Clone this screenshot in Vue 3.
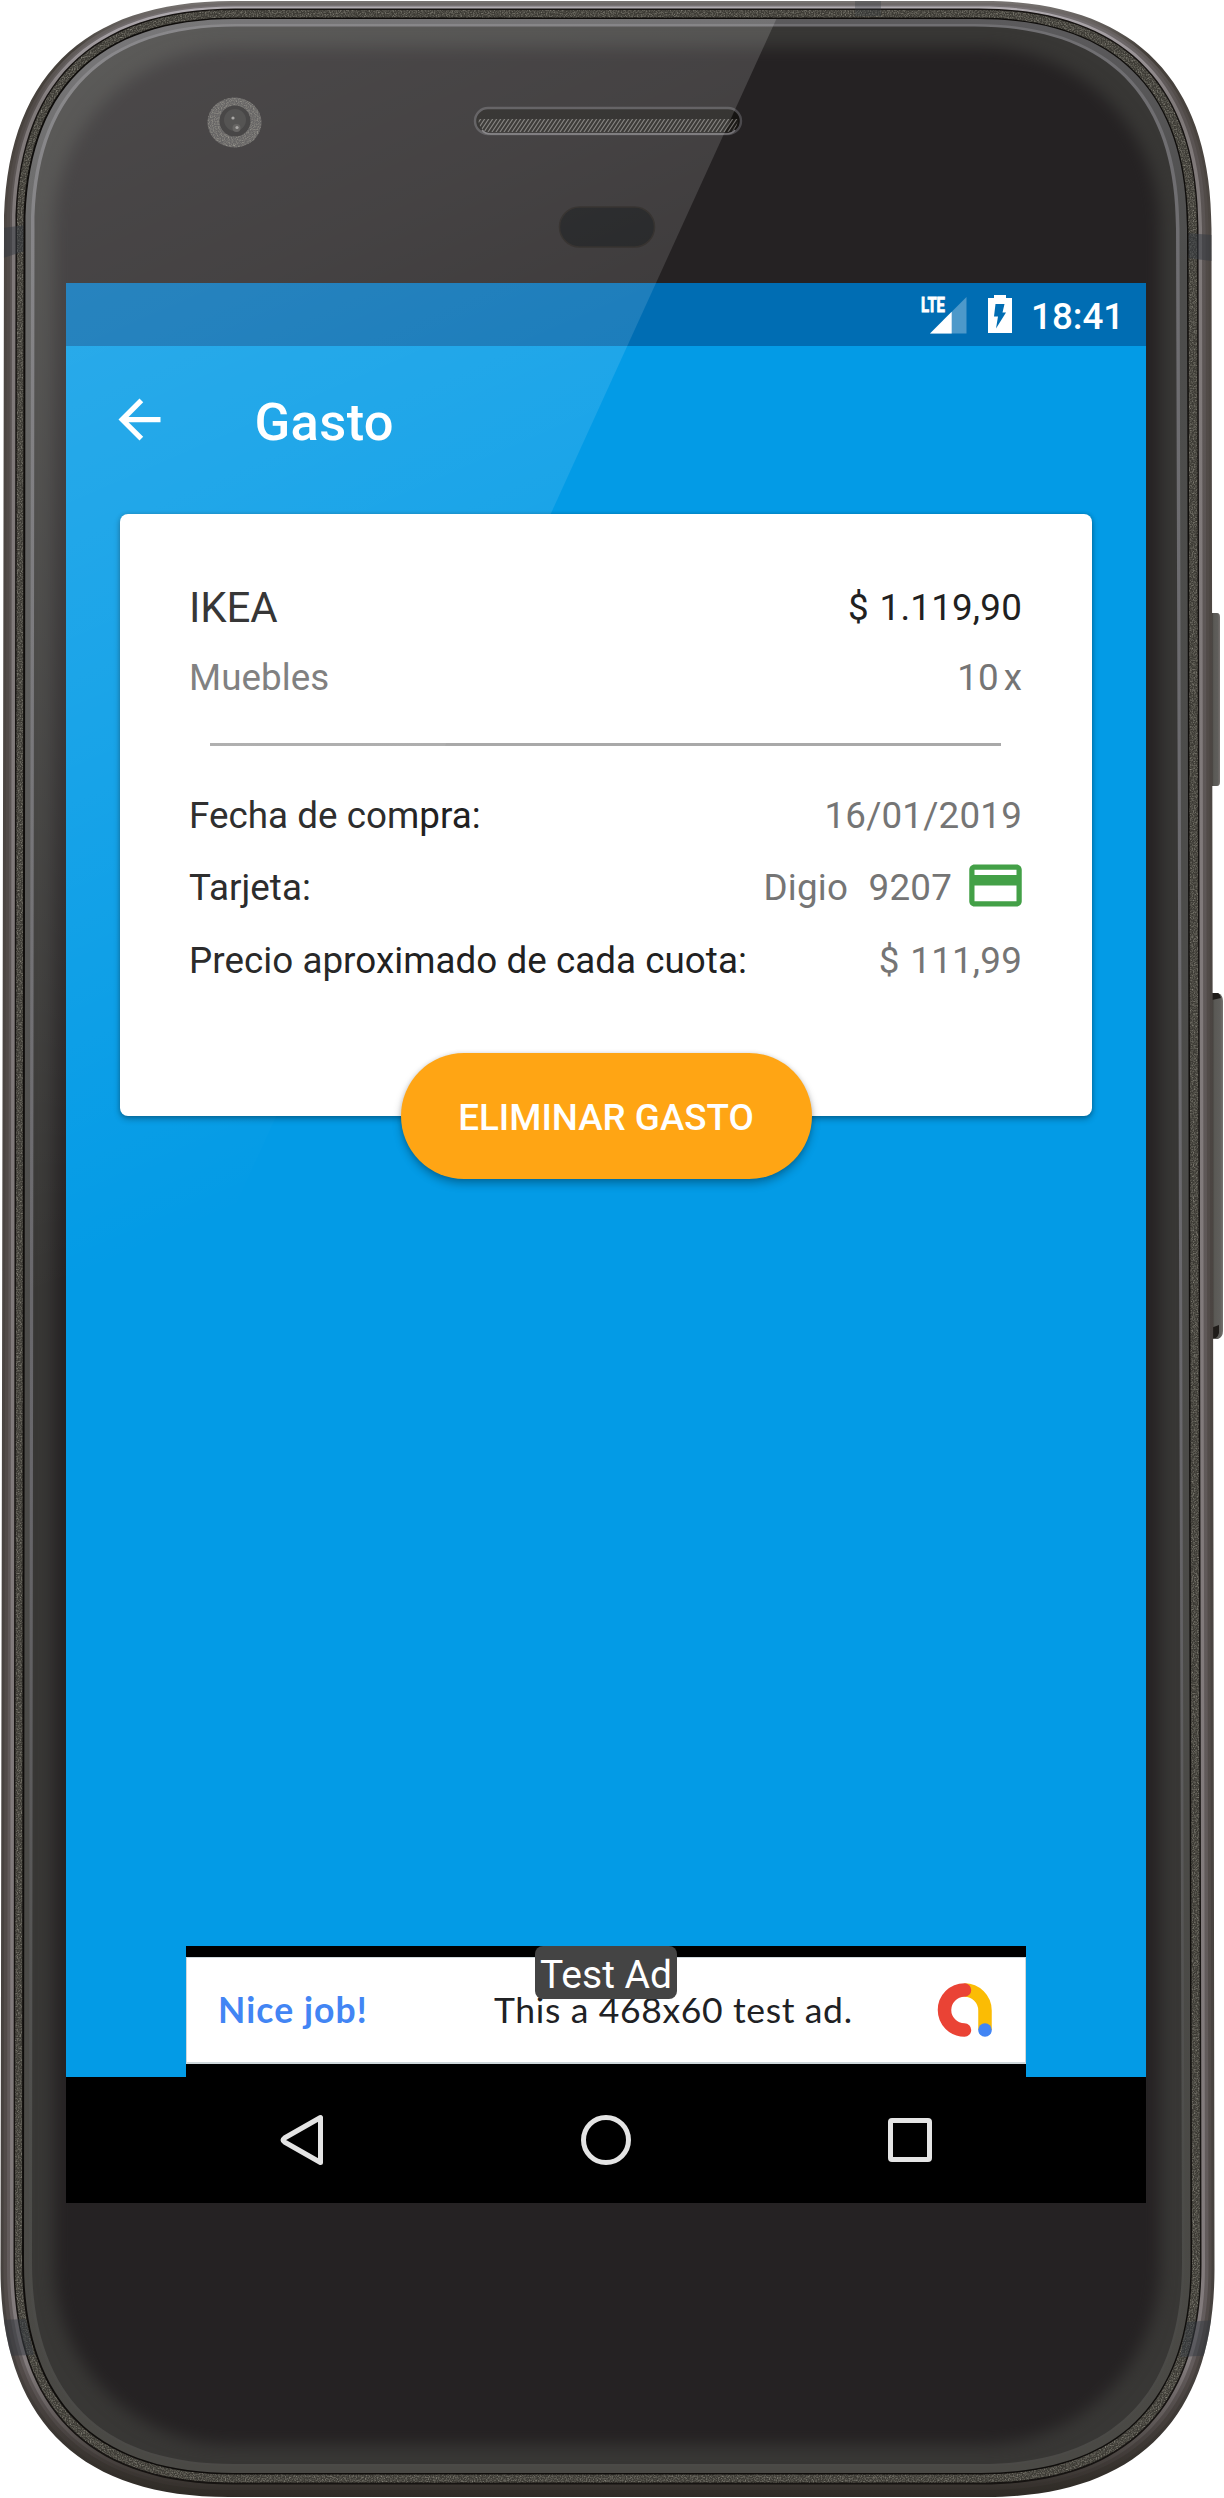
<script setup>
// Builds a slightly tapered, soft-cornered outline for one layer of the phone shell.
function shell(lt, lb, rt, rb, t, b, e) {
  const k = e * 0.342
  return [
    `M${lt} ${t + e}`,
    `C${lt} ${t + k} ${lt + k} ${t} ${lt + e} ${t}`,
    `L${rt - e} ${t}`,
    `C${rt - k} ${t} ${rt} ${t + k} ${rt} ${t + e}`,
    `L${rb} ${b - e}`,
    `C${rb} ${b - k} ${rb - k} ${b} ${rb - e} ${b}`,
    `L${lb + e} ${b}`,
    `C${lb + k} ${b} ${lb} ${b - k} ${lb} ${b - e}`,
    'Z'
  ].join('')
}

const metal = [
  { d: shell(4, 0.5, 1211.5, 1214.5, 1, 2497, 228), fill: 'url(#m0)' },
  { d: shell(7, 3.5, 1208.5, 1211.5, 3, 2494, 226), fill: 'url(#m1)' },
  { d: shell(10, 7, 1205.5, 1208.5, 5, 2490, 224), fill: 'url(#m2)' },
  { d: shell(12, 10, 1202, 1205, 6.5, 2487, 222), fill: 'url(#m3)' },
  { d: shell(15.5, 13.5, 1198.5, 1201.5, 8.5, 2484.5, 220), fill: '#161311' }
]
const grain = shell(17, 15, 1197, 1200, 10, 2482.5, 218)
const seam = shell(23.5, 22, 1188.5, 1192, 17.5, 2474.5, 212)
const bevel = shell(25.5, 24, 1187, 1190.5, 19, 2473, 210)
const bevelInner = shell(31, 29, 1179.5, 1184.5, 24, 2466, 205)
const glass = shell(34.5, 32, 1176, 1182, 26.5, 2464, 202)

const details = [
  { label: 'Fecha de compra:', value: '16/01/2019' },
  { label: 'Tarjeta:', value: 'Digio', digits: '9207', icon: true },
  { label: 'Precio aproximado de cada cuota:', value: '$ 111,99' }
]
</script>

<template>
  <main class="device">
    <svg class="shell" width="1224" height="2498" viewBox="0 0 1224 2498" aria-hidden="true">
      <defs>
        <linearGradient id="m0" x2="0" y2="1"><stop offset="0" stop-color="#777371"/><stop offset=".02" stop-color="#45403b"/><stop offset=".09" stop-color="#4d4743"/><stop offset=".5" stop-color="#4b4542"/><stop offset=".95" stop-color="#46413e"/><stop offset="1" stop-color="#2f2b26"/></linearGradient>
        <linearGradient id="m1" x2="0" y2="1"><stop offset="0" stop-color="#6f6a69"/><stop offset=".04" stop-color="#514b48"/><stop offset=".95" stop-color="#524b49"/><stop offset="1" stop-color="#302c27"/></linearGradient>
        <linearGradient id="m2" x2="0" y2="1"><stop offset="0" stop-color="#777274"/><stop offset=".04" stop-color="#5a5453"/><stop offset=".95" stop-color="#635c5c"/><stop offset="1" stop-color="#35302c"/></linearGradient>
        <linearGradient id="m3" x2="0" y2="1"><stop offset="0" stop-color="#b0abb0"/><stop offset=".04" stop-color="#7f7979"/><stop offset=".95" stop-color="#827b7c"/><stop offset="1" stop-color="#37322e"/></linearGradient>
        <linearGradient id="bev" x2="0" y2="1"><stop offset="0" stop-color="#5b5a5c"/><stop offset=".1" stop-color="#4d4d4c"/><stop offset="1" stop-color="#4a4945"/></linearGradient>
        <linearGradient id="bevIn" x2="0" y2="1"><stop offset="0" stop-color="#706f72"/><stop offset=".6" stop-color="#68676b"/><stop offset=".88" stop-color="#4c4c49"/><stop offset="1" stop-color="#4b4a47"/></linearGradient>
        <linearGradient id="key" x2="1" y2="0"><stop offset="0" stop-color="#35312e"/><stop offset=".3" stop-color="#5a5955"/><stop offset=".75" stop-color="#5f5e5b"/><stop offset="1" stop-color="#77716f"/></linearGradient>
        <filter id="soft" x="-5%" y="-5%" width="110%" height="110%" color-interpolation-filters="sRGB"><feGaussianBlur stdDeviation="8"/></filter>
        <filter id="speckle" x="0" y="0" width="100%" height="100%" color-interpolation-filters="sRGB">
          <feTurbulence type="fractalNoise" baseFrequency=".75" numOctaves="2" seed="4" result="n"/>
          <feColorMatrix in="n" type="matrix" values="0 0 0 0 .52  0 0 0 0 .51  0 0 0 0 .47  1.8 1 0 0 -1.2" result="c"/>
          <feComposite in="c" in2="SourceGraphic" operator="in" result="s"/>
          <feMerge><feMergeNode in="SourceGraphic"/><feMergeNode in="s"/></feMerge>
        </filter>
        <pattern id="mesh" width="4" height="6" patternUnits="userSpaceOnUse"><rect width="4" height="6" fill="#1c1a17"/><path d="M-1 7.5 5 -1.5M-3 4.5 1 -1.5M1 10.500 7 1.500" stroke="#72706d" stroke-width="1.100"/></pattern>
        <clipPath id="glassClip"><path :d="glass"/></clipPath>
        <clipPath id="metalClip"><path :d="metal[0].d"/></clipPath>
      </defs>

      <path d="M1211 613h6q3 0 3 4v165q0 4-3 4h-6z" fill="url(#key)"/>
      <path d="M1211 993h7q5 2 5 8v330q0 6-5 8h-7z" fill="url(#key)"/>
      <path d="M1211 993h7q2 1 3 5l-9 2zM1211 1328l8-3v8q-1 4-3 5h-5z" fill="#1f1c19"/>

      <path v-for="(m, i) in metal" :key="i" :d="m.d" :fill="m.fill"/>
      <path :d="grain" fill="#3d3b35" filter="url(#speckle)"/>
      <g clip-path="url(#metalClip)" fill="#343a42">
        <path d="M3 228 25 225v26l-22 7zM1187 233l25 2v26l-25-3zM0 2320l26-1 8 36-34 1zM1186 2322l29-2v35l-35 2z" opacity=".5"/>
        <path d="M855 0h26v16h-26z" opacity=".3"/>
      </g>
      <path :d="seam" fill="#0f0d0b"/>
      <path :d="bevel" fill="url(#bev)"/>
      <path :d="bevelInner" fill="url(#bevIn)"/>
      <path :d="glass" fill="#383735"/>
      <g clip-path="url(#glassClip)">
        <rect x="54" y="47" width="1106" height="2398" rx="180" fill="#252223" filter="url(#soft)"/>
      </g>

      <ellipse cx="234.500" cy="122.500" rx="27" ry="25" fill="#4a4848" filter="url(#speckle)"/>
      <circle cx="235" cy="121" r="15.500" fill="#252323"/>
      <circle cx="235" cy="120" r="11" fill="#343332"/>
      <circle cx="236.500" cy="128" r="4" fill="#4a4846"/>
      <circle cx="233" cy="118" r="1.600" fill="#989694"/>
      <circle cx="237" cy="127.500" r="1.600" fill="#989694"/>

      <rect x="475" y="108" width="266" height="26" rx="13" fill="#161412" stroke="#4b494c" stroke-width="2.400"/>
      <path d="M478 119h260q-1 13-12 13H489q-10-1-11-13z" fill="url(#mesh)"/>
      <path d="M482 130q3 4 9 4h235q6 0 9-4" fill="none" stroke="#757376" stroke-width="1.500"/>
      <rect x="559.500" y="207" width="95" height="40" rx="20" fill="#0c0d0f" stroke="#1a1613" stroke-width="1.500"/>
    </svg>

    <section class="screen">
      <header class="status">
        <svg class="signal" width="48" height="40" viewBox="0 0 48 40">
          <path d="M46.500 3v36.500H10z" fill="#fff" opacity=".3"/>
          <path d="M31.700 17.800v21.700H10z" fill="#fff"/>
          <text x="1" y="18" textLength="24" lengthAdjust="spacingAndGlyphs">LTE</text>
        </svg>
        <svg class="battery" width="24" height="38" viewBox="0 0 24 38">
          <path d="M6 0h12v3h6v35H0V3h6z" fill="#fff"/>
          <path d="M7.500 9h9L14.500 17.500H18L8 33.500l2-12H6z" fill="#006db3"/>
        </svg>
        <span class="clock">18:41</span>
      </header>

      <nav class="toolbar">
        <svg width="63" height="63" viewBox="0 0 24 24" fill="#fff"><path d="M20 11H7.830l5.590-5.590L12 4l-8 8 8 8 1.410-1.410L7.830 13H20v-2z"/></svg>
        <h1>Gasto</h1>
      </nav>

      <article class="card">
        <div class="row head"><span class="store">IKEA</span><span class="price">$ 1.119,90</span></div>
        <div class="row sub"><span>Muebles</span><span class="times"><span>10</span><span>x</span></span></div>
        <hr>
        <div v-for="d in details" :key="d.label" class="row detail">
          <span>{{ d.label }}</span>
          <span class="value">
            <span>{{ d.value }}</span>
            <span v-if="d.digits" class="digits">{{ d.digits }}</span>
            <svg v-if="d.icon" width="63" height="63" viewBox="0 0 24 24" fill="#43a047"><path d="M20 4H4c-1.110 0-1.990.89-1.990 2L2 18c0 1.110.89 2 2 2h16c1.110 0 2-.89 2-2V6c0-1.110-.89-2-2-2zm0 14H4v-6h16v6zm0-10H4V6h16v2z"/></svg>
          </span>
        </div>
      </article>
      <button class="delete" type="button">ELIMINAR GASTO</button>

      <aside class="ad">
        <div class="banner">
          <strong>Nice job!</strong>
          <span class="copy">This a 468x60 test ad.</span>
          <svg width="56" height="56" viewBox="0 0 56 56" fill="none" stroke-width="13.500">
            <path d="M27.500 8A20.500 20.500 0 0 1 48 28.500V48" stroke="#fbbc04"/>
            <path d="M27.500 8a20 20 0 0 0 0 40" stroke="#ea4335" stroke-linecap="round"/>
            <circle cx="48" cy="48" r="6.800" fill="#4285f4"/>
          </svg>
        </div>
        <span class="badge">Test Ad</span>
      </aside>

      <footer class="keys">
        <svg width="50" height="56" viewBox="0 0 50 56"><path d="M44.500 5.500v45L8.500 30q-3-2 0-4z"/></svg>
        <svg width="50" height="56" viewBox="0 0 50 56"><circle cx="25" cy="28" r="22.500"/></svg>
        <svg width="50" height="56" viewBox="0 0 50 56"><rect x="5.500" y="8.500" width="39" height="39" rx="1.500"/></svg>
      </footer>
    </section>

    <svg class="sheen" width="1224" height="2498" viewBox="0 0 1224 2498" aria-hidden="true">
      <defs>
        <linearGradient id="gl" gradientUnits="userSpaceOnUse" x1="0" y1="0" x2="482" y2="1108">
          <stop offset="0" stop-color="#fff" stop-opacity=".185"/><stop offset=".29" stop-color="#fff" stop-opacity=".147"/>
          <stop offset=".56" stop-color="#fff" stop-opacity=".095"/><stop offset="1" stop-color="#fff" stop-opacity="0"/>
        </linearGradient>
        <clipPath id="sheenClip"><path :d="bevel"/></clipPath>
      </defs>
      <path d="M0 0H785L66 1577H0z" fill="url(#gl)" clip-path="url(#sheenClip)"/>
    </svg>
  </main>
</template>

<style>
body { margin: 0; background: #fff; }
</style>

<style scoped>
.device {
  position: relative;
  box-sizing: border-box;
  width: 1224px;
  height: 2498px;
  padding: 283px 78px 295px 66px;
  overflow: hidden;
  font-family: Roboto, "Noto Sans", sans-serif;
}
.shell, .sheen { position: absolute; top: 0; left: 0; pointer-events: none; }
.screen {
  position: relative;
  display: flex;
  flex-direction: column;
  height: 1920px;
  background: #039be6;
}
.status {
  display: flex;
  align-items: center;
  justify-content: flex-end;
  height: 63px;
  padding-right: 27px;
  background: #006db3;
  color: #fff;
}
.signal { margin: -1px 20px 0 0; }
.signal text { font: 700 21px Roboto, sans-serif; fill: #fff; stroke: #fff; stroke-width: .9px; }
.battery { margin: -1px 19px 0 0; }
.clock { font-size: 36.75px; font-weight: 500; line-height: 40px; width: 88px; margin-top: 4px; white-space: nowrap; }
.toolbar {
  display: flex;
  align-items: center;
  height: 147px;
  padding-left: 41.5px;
}
.toolbar h1 { margin: 4px 0 0 84px; font-size: 52.5px; font-weight: 500; line-height: 60px; letter-spacing: .35px; color: #fff; }
.card {
  box-sizing: border-box;
  width: 972px;
  height: 602px;
  margin: 21px 0 0 54px;
  padding: 68.5px 70px 0 69px;
  border-radius: 8px;
  background: #fff;
  color: #212121;
  font-size: 36.75px;
  line-height: 50px;
  letter-spacing: .05px;
  box-shadow: 0 3px 6px rgba(0, 0, 0, .3), 0 0 4px rgba(0, 0, 0, .18);
}
.row { display: flex; justify-content: space-between; align-items: center; height: 50px; white-space: nowrap; }
.store { font-size: 42px; letter-spacing: -.1px; }
.price, .value { font-kerning: none; letter-spacing: .2px; word-spacing: 1.5px; }
.sub { margin-top: 20px; color: #757575; }
.times { display: flex; gap: 5px; }
hr { height: 3px; margin: 40.5px 21px 44.5px; border: 0; background: #a9a9a9; }
.detail + .detail { margin-top: 22px; }
.detail + .detail + .detail { margin-top: 23.5px; }
.value { display: flex; align-items: center; color: #757575; }
.digits { margin-left: 20.5px; }
.value svg { margin: -10px -5px -6px 12px; }
.delete {
  position: relative;
  align-self: center;
  width: 411px;
  height: 126px;
  margin-top: -63px;
  padding: 3px 0 0;
  border: 0;
  border-radius: 63px;
  background: #ffa514;
  color: #fff;
  font: 500 36.75px/50px Roboto, sans-serif;
  white-space: nowrap;
  box-shadow: 0 5px 8px rgba(0, 0, 0, .28), 0 0 4px rgba(0, 0, 0, .12);
}
.ad {
  position: relative;
  box-sizing: border-box;
  width: 840px;
  height: 131px;
  margin: auto 0 0 120px;
  padding: 11px 0 13px;
  background: #000;
}
.banner {
  display: flex;
  align-items: center;
  box-sizing: border-box;
  height: 107px;
  padding: 0 31px;
  border: 1px solid #cfd8dc;
  border-bottom-width: 2px;
  background: #fff;
  font-family: Lato, sans-serif;
  font-size: 35.5px;
  line-height: 44px;
  white-space: nowrap;
}
.banner strong { width: 276px; color: #4285f4; letter-spacing: 1.1px; }
.copy { width: 443px; color: #202124; letter-spacing: .65px; }
.banner svg { flex: none; }
.badge {
  position: absolute;
  top: 0;
  left: 349px;
  width: 142px;
  height: 53px;
  border-radius: 8px;
  background: #444;
  color: #fff;
  font-size: 39px;
  line-height: 58.5px;
  text-align: center;
  white-space: nowrap;
}
.keys {
  display: flex;
  align-items: center;
  justify-content: space-between;
  box-sizing: border-box;
  height: 126px;
  padding: 0 211px 0 210px;
  background: #000;
}
.keys svg { fill: none; stroke: #e4e4e4; stroke-width: 5; stroke-linejoin: round; }
</style>
